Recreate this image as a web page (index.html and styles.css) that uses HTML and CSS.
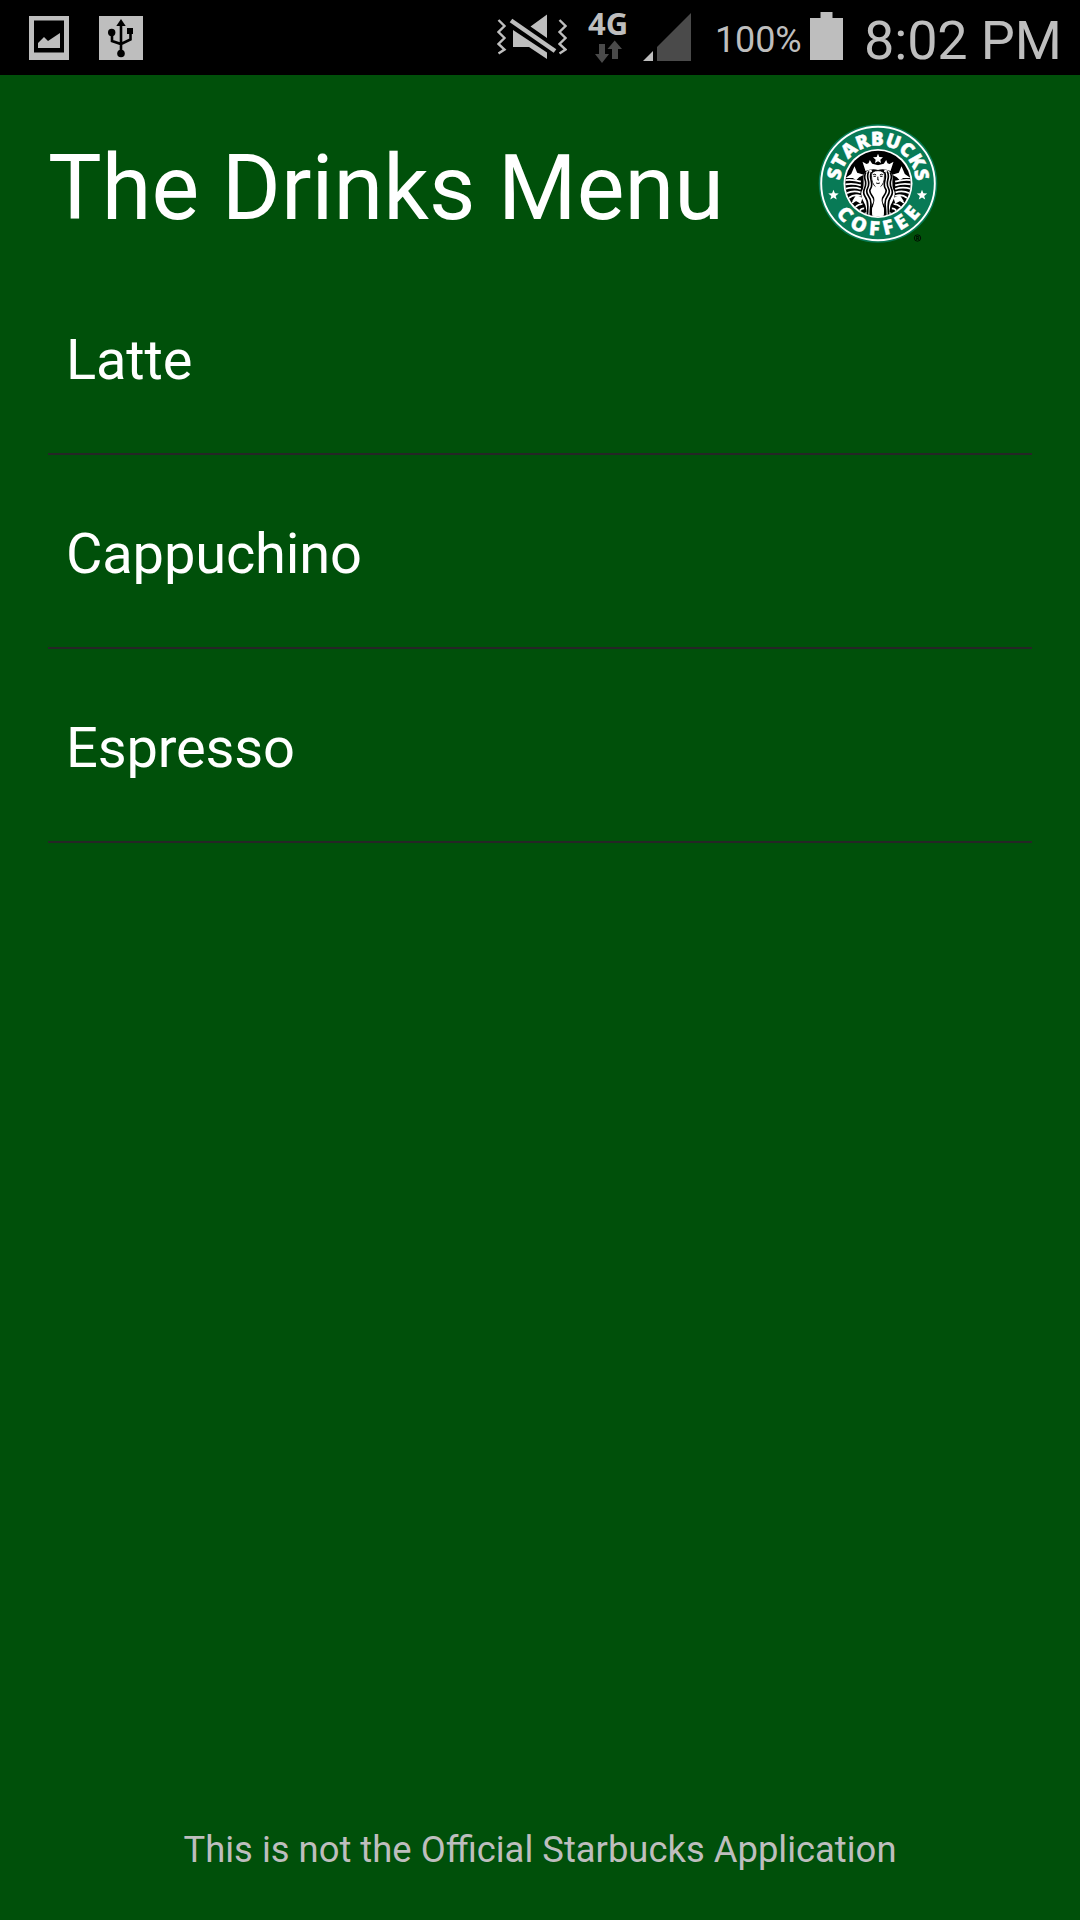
FILE: index.html
```html
<!DOCTYPE html>
<html lang="en">
<head>
<meta charset="utf-8">
<title>The Drinks Menu</title>
<link rel="stylesheet" href="styles.css">
</head>
<body>
<div class="screen">
  <header class="status">
    <svg class="notifications" width="114" height="44" viewBox="29 16 114 44">
      <path fill="#bebebe" fill-rule="evenodd" d="M29 16h40v44H29zM34 20.500v32h30v-32z"/>
      <path fill="#bebebe" d="M38 48v-5l6-6 4 4 12-8v15z"/>
      <path fill="#bebebe" d="M99 16h44v44H99z"/>
      <path d="M121 19l-4.700 7h9.400zM127 28h6v6h-6z"/>
      <circle cx="111.700" cy="32.500" r="3.700"/><circle cx="121" cy="53.500" r="3.800"/>
      <path fill="none" stroke="#000" stroke-width="2.600" d="M121 24v28M112 34v7l9 3 9.500-4.500V32"/>
    </svg>
    <svg class="muted" width="70" height="48" viewBox="497 13 70 48">
      <path fill="none" stroke="#bebebe" stroke-width="2.400" d="M498.500 20l6 6-6 6 6 6-6 6 6 5.500-6 4M559.500 20l6 6-6 6 6 6-6 6 6 5.500-6 4"/>
      <path fill="#bebebe" d="M547 14.500v23.500L530.500 26.500zM513 30l34 22.500V59l-18-12h-16z"/>
      <path stroke="#bebebe" stroke-width="4.500" d="M511 20.500L555 51"/>
    </svg>
    <div class="network">
      <span class="generation">4G</span>
      <svg width="27" height="23" viewBox="595 40 27 23"><path fill="#4a4a4a" d="M599 44h6v10h4l-7 9-7-9h4zM612 59h6V49h4l-7.300-8.500L607.500 49h4.500z"/></svg>
    </div>
    <svg class="signal" width="48" height="48" viewBox="643 13 48 48"><path fill="#4a4a4a" d="M691 13v48h-34V47z"/><path fill="#bebebe" d="M653 51v10h-10z"/></svg>
    <span class="percent">100%</span>
    <svg class="battery" width="33" height="48" viewBox="0 0 33 48"><path fill="#bebebe" d="M10.500 0h12v6H33v42H0V6h10.500z"/></svg>
    <time class="clock">8:02 PM</time>
  </header>
  <main class="content">
    <div class="heading">
      <h1>The Drinks Menu</h1>
      <svg class="logo" width="120" height="120" viewBox="-60 -59.500 120 120">
        <defs>
          <path id="top" d="M-38 2v-2a38 38 0 0 1 76 0v2"/>
          <path id="bottom" d="M-52 0a52 52 0 0 0 104 0"/>
          <path id="star" d="M0-5.200l1.400 3.500 3.800.2-3 2.400 1 3.700L0 2.500l-3.200 2.100 1-3.700-3-2.400 3.800-.2z"/>
          <clipPath id="disc"><circle cx="107.500" cy="115.500" r="98"/></clipPath>
          <g id="side">
            <path fill="#fff" d="M37 64l8 19 20 6-14 8-9 9-10-7H10l17-12zM61 50l12 7 6-2 4-10 7 11 18 5v14q-18-5-38 3z"/>
            <path fill="none" stroke="#fff" stroke-width="5" d="M5 106q25-4 51 4M5 119q25-6 51 2M8 132q25-8 48 0M13 145q20-10 42-3M20 159q16-13 36-6M30 174q10-12 28-10M40 186q9-9 21-9M52 198q5-8 14-8M64 210q4-6 10-6"/>
            <path fill="#fff" d="M42 150l18 8-4 18-16-9-10 2z"/>
            <path fill="#fff" d="M88 74Q62 76 64 103T58 140q-3 17 7 32t8 48h34v-70z"/>
            <g fill="none" stroke="#000" stroke-width="5">
              <path d="M71 82q-6 10-2 23t-2 26 2 24 8 29-2 32"/>
              <path d="M80 79q-6 10-2 25t-2 26 3 23 7 28-2 36"/>
              <path d="M88 81q-5 10-1 26t-2 24 5 22 2 26-2 38"/>
            </g>
            <path fill="#fff" d="M107.500 124H98q-7 11-6 23 8 12 3 27-6 18-4 44h17z"/>
          </g>
        </defs>
        <circle r="59.300" fill="#087a56"/>
        <circle r="56.800" fill="none" stroke="#fff" stroke-width="1.900"/>
        <circle r="34.500" fill="#fff"/><circle r="32.700"/>
        <g class="lettering">
          <text><textPath href="#top" startOffset="5" textLength="114">STARBUCKS</textPath></text>
          <text class="lower"><textPath href="#bottom" startOffset="32.500" textLength="99">COFFEE</textPath></text>
        </g>
        <use href="#star" x="-44.500" y="11.500" fill="#fff"/><use href="#star" x="44" y="11.500" fill="#fff"/>
        <g transform="scale(.33333) translate(-107.500 -115.500)">
          <g clip-path="url(#disc)">
            <use href="#side"/><use href="#side" transform="translate(215 0) scale(-1 1)"/>
            <path fill="#fff" d="M107.500 26l4 10 11 1-8 7 2 10-9-5-9 5 2-10-8-7 11-1z"/>
            <path fill="#fff" stroke="#000" stroke-width="2.500" d="M88 92q0-15 19.500-15T127 92q0 24-13 34h-13Q88 116 88 92z"/>
            <path fill="#fff" d="M100 122h15v10h-15z"/>
            <path fill="none" stroke="#000" stroke-width="3" d="M93 89q5-3 9 1M113 90q5-4 9-1M94 94h7M114 94h7M107 95v10h3M102 114q5 3 11 0"/>
          </g>
        </g>
        <circle cx="39.500" cy="54.500" r="3.200" fill="none" stroke="#000" stroke-width=".8"/>
        <text class="registered" x="39.500" y="56.300">R</text>
      </svg>
    </div>
    <ul class="drinks"><li>Latte</li><li>Cappuchino</li><li>Espresso</li></ul>
    <p class="notice">This is not the Official Starbucks Application</p>
  </main>
</div>
</body>
</html>
```
FILE: styles.css
```css
body { margin: 0; font-family: Roboto, sans-serif; }
.screen { width: 1080px; height: 1920px; display: flex; flex-direction: column; background: #00500a; color: #fff; }
.screen svg { display: block; flex: none; }

.status { box-sizing: border-box; height: 75px; padding-left: 29px; display: flex; align-items: flex-start; background: #000; color: #bebebe; white-space: nowrap; }
.notifications { margin-top: 16px; }
.muted { margin: 13px 0 0 354px; }
.network { width: 42px; margin: 8px 0 0 20px; display: flex; flex-direction: column; gap: 1px; }
.network svg { margin-left: 8px; }
.generation { padding-left: 1px; font: 700 31px/31px "Open Sans", sans-serif; }
.signal { margin: 13px 0 0 14px; }
.percent { width: 87px; margin: 22px 0 0 24px; font-size: 36px; line-height: 36px; letter-spacing: -0.15px; }
.battery { margin: 12px 0 0 8px; }
.clock { margin: 14px 0 0 21px; font-size: 54px; line-height: 54px; letter-spacing: -0.15px; }

.content { flex: 1; display: flex; flex-direction: column; padding: 0 48px; }
.heading { height: 186px; display: flex; align-items: flex-start; }
h1 { margin: 69px 0 0; width: 770px; font-size: 90px; line-height: 90px; font-weight: 400; letter-spacing: 0.1px; }
.logo { margin-top: 49px; }
.lettering { fill: #fff; stroke: #fff; stroke-width: 0.5px; font: 800 19px "Open Sans", sans-serif; }
.lower { font-size: 20px; stroke-width: 0.3px; }
.registered { font: 700 5px Roboto, sans-serif; text-anchor: middle; }

.drinks { margin: 0; padding: 0; list-style: none; font-size: 56px; letter-spacing: -0.15px; }
.drinks li { box-sizing: border-box; height: 194px; padding: 6px 18px 0; border-bottom: 2px solid #262626; line-height: 186px; }
.notice { margin: auto 0 52px; color: #bebebe; font-size: 36.4px; line-height: 36px; text-align: center; }
```
